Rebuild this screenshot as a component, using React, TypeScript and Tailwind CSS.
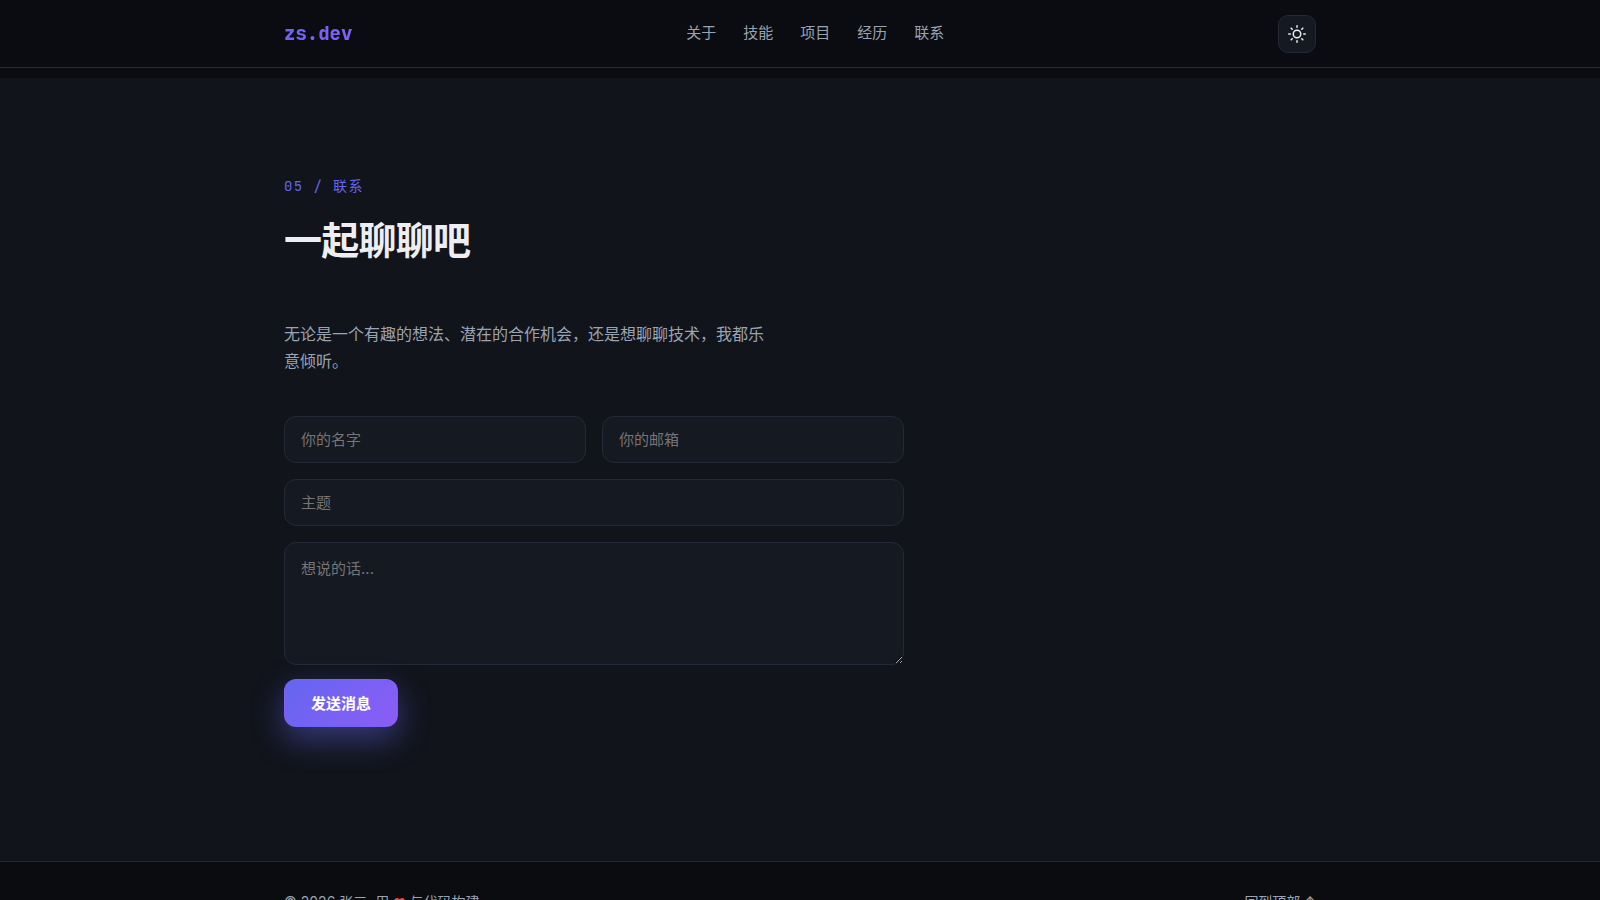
import React from 'react';
import { FiSun } from 'react-icons/fi';

const links = [
  { label: '关于', href: '#about' },
  { label: '技能', href: '#skills' },
  { label: '项目', href: '#projects' },
  { label: '经历', href: '#experience' },
  { label: '联系', href: '#contact' },
];

const fieldClass =
  'w-full rounded-xl border border-[#252937] bg-[#151921] px-4 text-[15px] leading-[23px] text-[#ededf2] outline-none placeholder:text-[#757575] focus:border-[#6366f1]';

const Header = () => {
  return (
    <header className="sticky top-0 z-10 border-b border-[#2a2b33] bg-[#0b0c11]">
      <nav className="mx-auto flex h-[67px] max-w-[1080px] items-center justify-between px-6">
        <a
          href="#top"
          className="bg-gradient-to-br from-[#6366f1] to-[#8b5cf6] bg-clip-text font-['JetBrains_Mono','Noto_Sans_CJK_SC',monospace] text-[19px] leading-8 font-extrabold text-transparent"
        >
          zs.dev
        </a>
        <ul className="flex gap-[27px]">
          {links.map((link) => (
            <li key={link.href} className="pb-[3px] leading-6">
              <a
                href={link.href}
                className="text-[15px] text-[#9aa3b2] hover:text-[#ededf2]"
              >
                {link.label}
              </a>
            </li>
          ))}
        </ul>
        <button
          type="button"
          aria-label="切换主题"
          className="flex size-[38px] items-center justify-center rounded-[10px] border border-[#252937] bg-[#151921] text-[#ededf2]"
        >
          <FiSun size={18} />
        </button>
      </nav>
    </header>
  );
};

const ContactForm = () => {
  return (
    <form className="flex max-w-[620px] flex-col gap-4">
      <div className="grid gap-4 sm:grid-cols-2">
        <input
          type="text"
          aria-label="你的名字"
          placeholder="你的名字"
          className={`${fieldClass} py-[11px]`}
        />
        <input
          type="email"
          aria-label="你的邮箱"
          placeholder="你的邮箱"
          className={`${fieldClass} py-[11px]`}
        />
      </div>
      <input
        type="text"
        aria-label="主题"
        placeholder="主题"
        className={`${fieldClass} py-[11px]`}
      />
      <div className="flex flex-col items-start gap-3.5">
        <textarea
          aria-label="想说的话"
          placeholder="想说的话..."
          className={`${fieldClass} block h-[123px] resize-y py-3.5`}
        />
        <button
          type="submit"
          className="rounded-xl border border-transparent bg-linear-135 from-[#6366f1] to-[#8b5cf6] px-[26px] pt-3 pb-[10px] text-[15px] leading-6 font-semibold text-white shadow-[0_12px_32px_rgba(99,102,241,0.45)]"
        >
          发送消息
        </button>
      </div>
    </form>
  );
};

const Contact = () => {
  return (
    <section id="contact" className="bg-[#11141b] pt-24 pb-[134px]">
      <div className="mx-auto max-w-[1080px] px-6">
        <p className="font-['JetBrains_Mono','Noto_Sans_CJK_SC',monospace] text-sm leading-6 tracking-widest text-[#6366f1]">
          05 / 联系
        </p>
        <h2 className="mt-3 text-[38px] leading-[60px] font-bold tracking-[-0.02em] text-[#ededf2]">
          一起聊聊吧
        </h2>
        <p className="mt-[51px] mb-[41px] max-w-[480px] text-base leading-[27px] text-[#9aa3b2]">
          无论是一个有趣的想法、潜在的合作机会，还是想聊聊技术，我都乐意倾听。
        </p>
        <ContactForm />
      </div>
    </section>
  );
};

const Footer = () => {
  return (
    <footer className="border-t border-[#252937] py-7">
      <div className="mx-auto flex max-w-[1080px] items-center justify-between px-6 text-sm leading-6 text-[#9aa3b2]">
        <p>
          © 2026 张三. 用 <span className="text-xs text-[#ef4444]">♥</span>{' '}
          与代码构建
        </p>
        <a href="#top" className="hover:text-[#ededf2]">
          回到顶部 ↑
        </a>
      </div>
    </footer>
  );
};

const App = () => {
  return (
    <div
      id="top"
      className="min-h-screen bg-[#0b0c10] font-['Inter','Noto_Sans_CJK_SC',sans-serif]"
    >
      <Header />
      <main className="pt-2.5">
        <Contact />
      </main>
      <Footer />
    </div>
  );
};

export default App;
